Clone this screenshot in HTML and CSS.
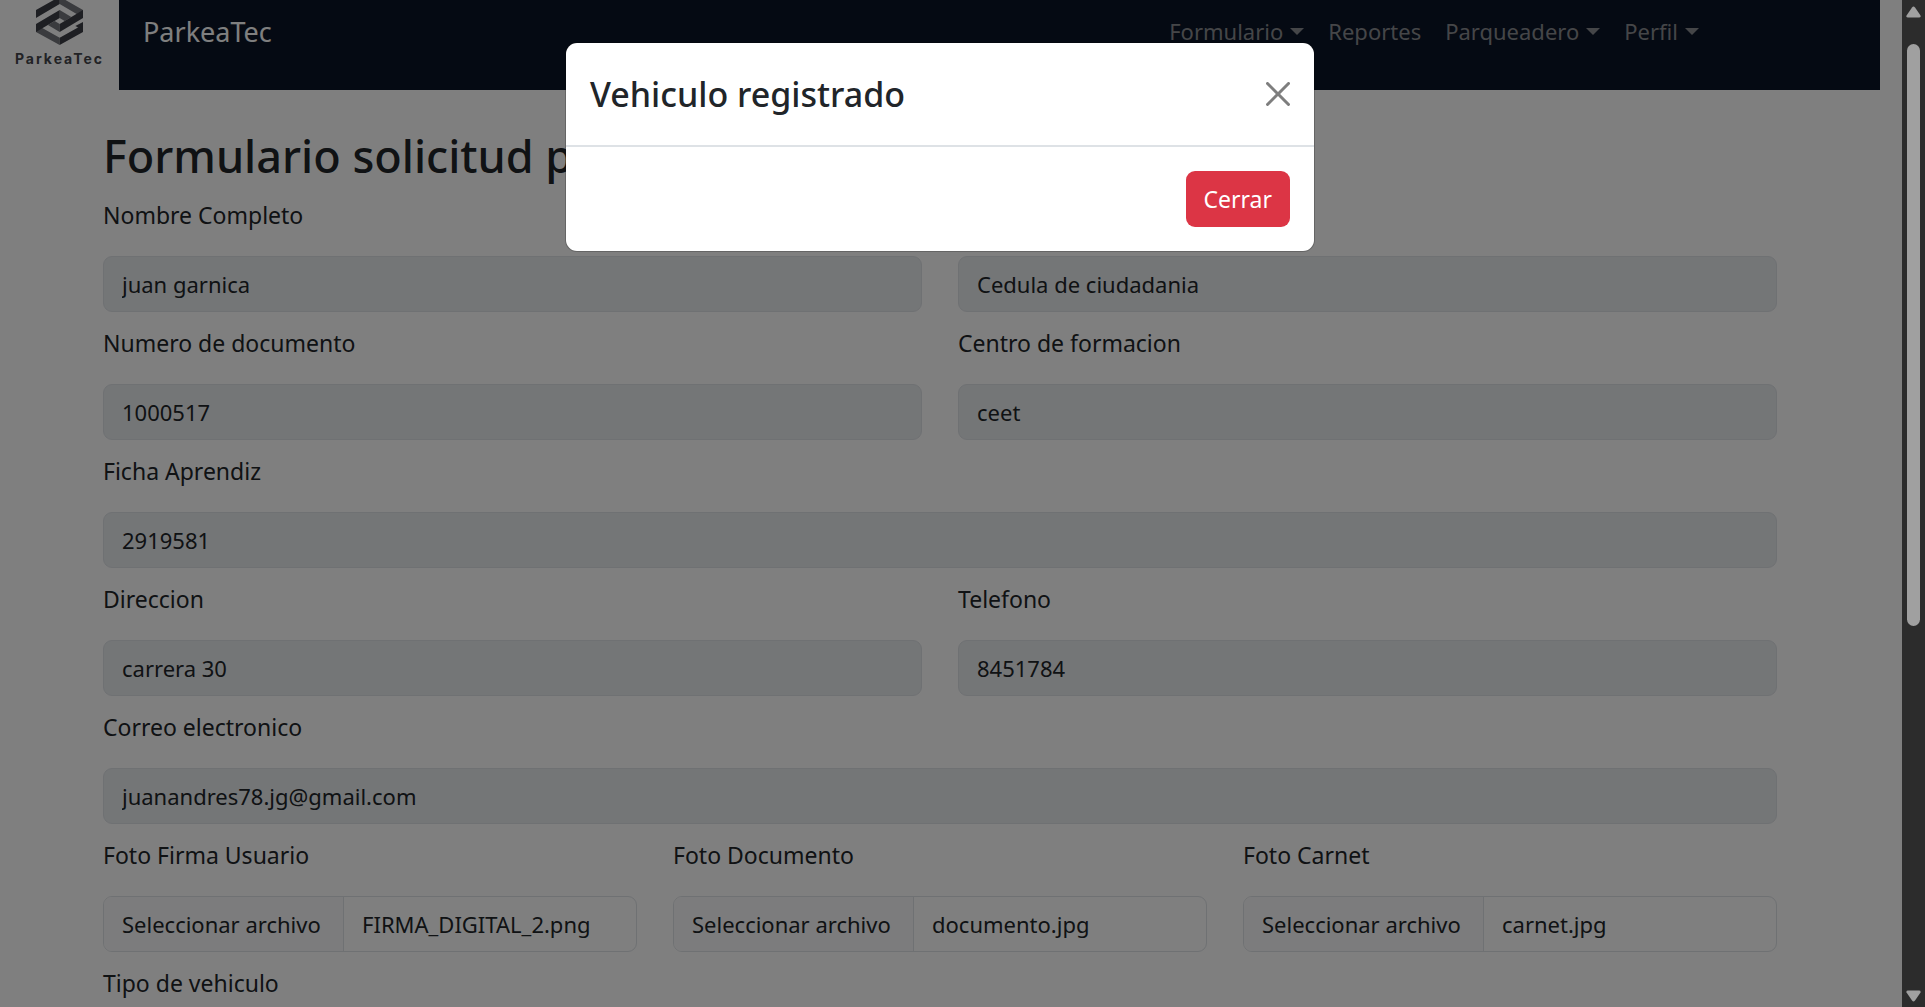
FILE: index.html
```html
<!DOCTYPE html>
<html lang="es">
<head>
<meta charset="utf-8">
<title>ParkeaTec</title>
<link rel="stylesheet" href="styles.css">
</head>
<body>
<div class="app">
  <div class="page">
    <header class="navbar">
      <a class="logo" href="#" aria-label="ParkeaTec inicio">
        <svg class="logo-mark" width="47" height="49" viewBox="0 0 141 147" aria-hidden="true">
          <path fill="#74767c" d="M71 2 141 42V66L122 54 71 24z"/>
          <path fill="#3c3e46" d="M71 2V24L20 54 0 66V42z"/>
          <path fill="#74767c" d="M0 84V108L71 147V125L20 97z"/>
          <path fill="#3c3e46" d="M141 84V108L71 147V125L122 97z"/>
          <path fill="#74767c" d="M71 42 106 63 86 75 71 66z"/>
          <path fill="#74767c" d="M71 108 36 87 56 75 71 84z"/>
          <path fill="#3c3e46" d="M0 84 71 42V66L0 108z"/>
          <path fill="#3c3e46" d="M141 42V66L71 108V84z"/>
          <path fill="#3c3e46" d="M141 78V90L130 96 118 90z"/>
        </svg>
        <span class="logo-text">ParkeaTec</span>
      </a>
      <div class="nav-inner">
        <a class="brand" href="#">ParkeaTec</a>
        <nav class="nav-links">
          <a class="nav-link caret" href="#">Formulario</a>
          <a class="nav-link" href="#">Reportes</a>
          <a class="nav-link caret" href="#">Parqueadero</a>
          <a class="nav-link caret" href="#">Perfil</a>
        </nav>
      </div>
    </header>
    <main class="container">
      <h1 class="title">Formulario solicitud parqueadero</h1>
      <form class="form">
        <div class="field half"><label for="nombre">Nombre Completo</label><input id="nombre" class="control" type="text" value="juan garnica" disabled></div>
        <div class="field half"><label for="tipo">Tipo de documento</label><input id="tipo" class="control" type="text" value="Cedula de ciudadania" disabled></div>
        <div class="field half"><label for="numero">Numero de documento</label><input id="numero" class="control" type="text" value="1000517" disabled></div>
        <div class="field half"><label for="centro">Centro de formacion</label><input id="centro" class="control" type="text" value="ceet" disabled></div>
        <div class="field full"><label for="ficha">Ficha Aprendiz</label><input id="ficha" class="control" type="text" value="2919581" disabled></div>
        <div class="field half"><label for="direccion">Direccion</label><input id="direccion" class="control" type="text" value="carrera 30" disabled></div>
        <div class="field half"><label for="telefono">Telefono</label><input id="telefono" class="control" type="text" value="8451784" disabled></div>
        <div class="field full"><label for="correo">Correo electronico</label><input id="correo" class="control" type="email" value="juanandres78.jg@gmail.com" disabled></div>
        <div class="field third"><label for="firma">Foto Firma Usuario</label><div class="file"><button id="firma" class="file-button" type="button">Seleccionar archivo</button><span class="file-name">FIRMA_DIGITAL_2.png</span></div></div>
        <div class="field third"><label for="documento">Foto Documento</label><div class="file"><button id="documento" class="file-button" type="button">Seleccionar archivo</button><span class="file-name">documento.jpg</span></div></div>
        <div class="field third"><label for="carnet">Foto Carnet</label><div class="file"><button id="carnet" class="file-button" type="button">Seleccionar archivo</button><span class="file-name">carnet.jpg</span></div></div>
        <div class="field full"><label for="vehiculo">Tipo de vehiculo</label><input id="vehiculo" class="control" type="text"></div>
      </form>
    </main>
    <div class="backdrop">
      <section class="modal" role="dialog" aria-labelledby="modal-title">
        <div class="modal-header">
          <h2 class="modal-title" id="modal-title">Vehiculo registrado</h2>
          <button class="close" type="button" aria-label="Cerrar ventana">
            <svg width="24" height="24" viewBox="0 0 16 16" aria-hidden="true"><path d="M.293.293a1 1 0 0 1 1.414 0L8 6.586 14.293.293a1 1 0 1 1 1.414 1.414L9.414 8l6.293 6.293a1 1 0 0 1-1.414 1.414L8 9.414l-6.293 6.293a1 1 0 0 1-1.414-1.414L6.586 8 .293 1.707a1 1 0 0 1 0-1.414z"/></svg>
          </button>
        </div>
        <div class="modal-footer"><button class="danger" type="button">Cerrar</button></div>
      </section>
    </div>
  </div>
  <div class="scrollbar" aria-hidden="true">
    <svg class="arrow" width="15" height="12" viewBox="0 0 15 12"><path d="M6 1.500Q7.500-.5 9 1.500L14.500 9.500Q15 11.500 13 11.500H2Q0 11.500.5 9.500z"/></svg>
    <div class="track"><div class="thumb"></div></div>
    <svg class="arrow" width="15" height="12" viewBox="0 0 15 12"><path d="M6 10.500Q7.500 12.500 9 10.500L14.500 2.500Q15 .5 13 .5H2Q0 .5.5 2.500z"/></svg>
  </div>
</div>
</body>
</html>
```
FILE: styles.css
```css
* { box-sizing: border-box; }
body { margin: 0; background: #fff; color: #212529; font: 23px/36px "Noto Sans", "Open Sans", sans-serif; overflow: hidden; }
button, input { font: inherit; color: inherit; }
a { text-decoration: none; color: inherit; }
.app { display: flex; height: 100vh; }
.page { position: relative; flex: 1; min-width: 0; padding-right: 22px; overflow: hidden; }

.navbar { display: flex; height: 90px; background: #0a1426; }
.logo { width: 119px; flex: none; background: #fff; display: flex; flex-direction: column; align-items: center; justify-content: flex-end; padding-bottom: 21px; }
.logo-mark { flex: none; margin-bottom: 4px; }
.logo-text { font: 700 14px/20px "Inter", sans-serif; letter-spacing: 2px; color: #44464c; }
.nav-inner { flex: 1; display: flex; justify-content: space-between; align-items: flex-start; padding: 8px 181px 0 24px; }
.brand { font-size: 27px; line-height: 48px; color: #fff; }
.nav-links { display: flex; gap: 24px; font-size: 22px; line-height: 46px; color: #8b8d91; }
.caret::after { content: ""; display: inline-block; margin-left: 7px; vertical-align: 5px; border: 7px solid transparent; border-top-color: currentColor; border-bottom: 0; }

.container { max-width: 1710px; margin: 0 auto; padding: 36px 18px 0; }
.title { margin: 0 0 11px; font-size: 45px; line-height: 60px; font-weight: 500; }
.form { display: grid; grid-template-columns: repeat(6, 1fr); column-gap: 36px; row-gap: 13px; }
.field { display: flex; flex-direction: column; gap: 23px; min-width: 0; }
.half { grid-column: span 3; }
.third { grid-column: span 2; }
.full { grid-column: span 6; }
.control, .file { width: 100%; height: 56px; font-size: 22px; border: 1px solid #dee2e6; border-radius: 9px; }
.control { padding: 9px 18px; }
.control:disabled { background: #e9ecef; color: #212529; }
.file { display: flex; overflow: hidden; }
.file-button { flex: none; width: 240px; border: 0; border-right: 1px solid #dee2e6; background: #f8f9fa; padding: 9px 18px; text-align: left; white-space: nowrap; }
.file-name { padding: 9px 18px; }

.backdrop { position: absolute; inset: 0; background: rgba(0, 0, 0, .5); padding: 43px 22px 0 0; }
.modal { max-width: 748px; margin: 0 auto; background: #fff; border-radius: 11px; box-shadow: 0 0 0 1px rgba(0, 0, 0, .2); }
.modal-header { display: flex; justify-content: space-between; align-items: center; padding: 24px; border-bottom: 2px solid #dee2e6; }
.modal-title { margin: 0; font-size: 34px; line-height: 54px; font-weight: 500; }
.close { border: 0; background: none; padding: 0; width: 24px; height: 24px; opacity: .5; }
.close svg { display: block; }
.modal-footer { display: flex; justify-content: flex-end; padding: 24px; }
.danger { height: 56px; padding: 0 18px; border: 0; border-radius: 9px; background: #dc3545; color: #fff; }

.scrollbar { width: 23px; flex: none; display: flex; flex-direction: column; align-items: center; background: #2c2c2c; padding: 6px 0 5px; }
.arrow { flex: none; fill: #a0a0a0; }
.track { flex: 1; padding-top: 26px; }
.thumb { width: 13px; height: 582px; border-radius: 7px; background: #a0a0a0; }
```
